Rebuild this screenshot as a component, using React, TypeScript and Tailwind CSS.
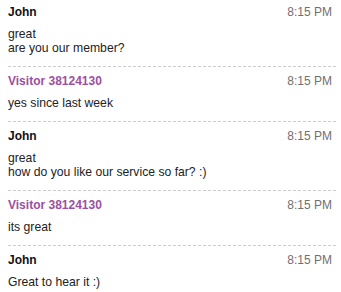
import React from "react";

type Msg = { name: string; visitor?: boolean; lines: string[] };

const msgs: Msg[] = [
  { name: "John", lines: ["great", "are you our member?"] },
  { name: "Visitor 38124130", visitor: true, lines: ["yes since last week"] },
  { name: "John", lines: ["great", "how do you like our service so far? :)"] },
  { name: "Visitor 38124130", visitor: true, lines: ["its great"] },
  { name: "John", lines: ["Great to hear it :)"] },
];

export default function App() {
  return (
    <div
      className="w-[341px] h-[292px] overflow-hidden bg-white text-[12px] text-[#222]"
      style={{ fontFamily: '"Liberation Sans", Arial, Helvetica, sans-serif' }}
    >
      <ul className="ml-[8px] mr-[5px] -mt-[2px]">
        {msgs.map((m, i) => (
          <li
            key={i}
            className={`pt-[7px] pb-[11px] ${i < msgs.length - 1 ? "border-b border-dashed border-[#cccccc]" : ""}`}
          >
            <div className="flex items-center justify-between leading-[15px] pr-[4px]">
              <span className={`font-bold ${m.visitor ? "text-[#9c4f9f]" : "text-[#111]"}`}>{m.name}</span>
              <span className="text-[#707070]">8:15 PM</span>
            </div>
            <div className="mt-[7px] leading-[14px] text-[12.2px]">
              {m.lines.map((l, j) => (
                <div key={j}>{l}</div>
              ))}
            </div>
          </li>
        ))}
      </ul>
    </div>
  );
}
